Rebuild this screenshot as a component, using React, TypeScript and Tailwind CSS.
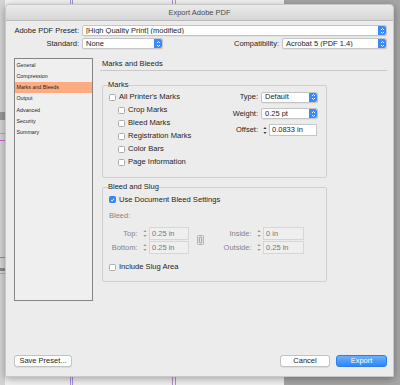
import React from 'react';

const font = "font-['Liberation_Sans',Arial,sans-serif]";

function Backdrop() {
  return (
    <svg className="absolute inset-0" width="400" height="385" viewBox="0 0 400 385">
      <rect x="0" y="0" width="400" height="385" fill="#a7a7a7" />
      <rect x="0" y="0" width="284" height="385" fill="#f3f3f3" />
      <rect x="0" y="0" width="5" height="385" fill="#d6d6d6" />
      <rect x="0" y="112" width="5" height="8" fill="#9a9a9a" />
      <rect x="0" y="268" width="5" height="3" fill="#8c8c8c" />
      <line x1="0" y1="133.5" x2="5" y2="133.5" stroke="#e88fb4" strokeWidth="1" />
      <line x1="0" y1="140.5" x2="5" y2="140.5" stroke="#d35fd8" strokeWidth="1" />
      <line x1="0" y1="257.5" x2="5" y2="257.5" stroke="#d35fd8" strokeWidth="1" />
      <line x1="0" y1="273.5" x2="5" y2="273.5" stroke="#e88fb4" strokeWidth="1" />
      <line x1="70.5" y1="0" x2="70.5" y2="385" stroke="#a98fe0" strokeWidth="1" />
      <line x1="72.5" y1="0" x2="72.5" y2="385" stroke="#a98fe0" strokeWidth="1" />
      <line x1="172.5" y1="0" x2="172.5" y2="385" stroke="#b58bd8" strokeWidth="1" />
      <line x1="175.5" y1="0" x2="175.5" y2="385" stroke="#e08a9a" strokeWidth="1" />
    </svg>
  );
}

function SelectArrows() {
  return (
    <svg width="7" height="10" viewBox="0 0 7 10">
      <path d="M2 4 L3.5 2.5 L5 4" fill="none" stroke="#fff" strokeWidth="0.9" />
      <path d="M2 6 L3.5 7.5 L5 6" fill="none" stroke="#fff" strokeWidth="0.9" />
    </svg>
  );
}

function Select({ value, className }: { value: string; className: string }) {
  return (
    <div
      className={`flex items-center bg-white border border-[#c4c4c4] rounded-[2px] shadow-[0_0.5px_0.5px_rgba(0,0,0,0.08)] ${className}`}
    >
      <span className="flex-1 pl-[3px] text-[7.5px] leading-none text-[#1e1e1e] whitespace-nowrap overflow-hidden">
        {value}
      </span>
      <div className="w-[8px] h-full bg-[#3b8af6] rounded-r-[2px] flex items-center justify-center">
        <SelectArrows />
      </div>
    </div>
  );
}

function Check({ checked = false }: { checked?: boolean }) {
  if (checked) {
    return (
      <div className="w-[7px] h-[7px] rounded-[1.5px] bg-[#3a8bf7] border border-[#2f7de6] flex items-center justify-center">
        <svg width="6" height="6" viewBox="0 0 6 6">
          <path d="M1.2 3.1 L2.5 4.4 L4.9 1.4" fill="none" stroke="#fff" strokeWidth="1" />
        </svg>
      </div>
    );
  }
  return <div className="w-[7px] h-[7px] rounded-[1.5px] bg-white border border-[#ababab]" />;
}

function CheckRow({ label, checked, indent }: { label: string; checked?: boolean; indent?: boolean }) {
  return (
    <div className={`h-[13px] flex items-center gap-[3px] ${indent ? 'pl-[9px]' : ''}`}>
      <Check checked={checked} />
      <span className="text-[7.6px] leading-none text-[#1e1e1e] whitespace-nowrap">{label}</span>
    </div>
  );
}

function Stepper({ disabled }: { disabled?: boolean }) {
  const c = disabled ? '#9a9a9a' : '#444';
  return (
    <div className="w-[8px] h-full flex items-center justify-center">
      <svg width="6" height="11" viewBox="0 0 6 11">
        <polygon points="3,2 1.4,4 4.6,4" fill={c} />
        <polygon points="3,9 1.4,7 4.6,7" fill={c} />
      </svg>
    </div>
  );
}

function NumField({ value, width, disabled }: { value: string; width: string; disabled?: boolean }) {
  return (
    <div className="flex h-[12.5px]">
      <Stepper disabled={disabled} />
      <div
        className={`${width} h-full flex items-center pl-[2px] border ${
          disabled ? 'bg-[#efefef] border-[#d6d6d6] text-[#777]' : 'bg-white border-[#c6c6c6] text-[#1e1e1e]'
        }`}
      >
        <span className="text-[7.5px] leading-none whitespace-nowrap">{value}</span>
      </div>
    </div>
  );
}

function BleedRow({ label, value, labelW, inputW }: { label: string; value: string; labelW: string; inputW: string }) {
  return (
    <div className="flex items-center h-[12.5px]">
      <span className={`${labelW} text-right text-[7.5px] leading-none text-[#858585] pr-[3.5px]`}>{label}</span>
      <NumField value={value} width={inputW} disabled />
    </div>
  );
}

function LinkIcon() {
  return (
    <svg width="7" height="10" viewBox="0 0 7 10">
      <rect x="0.5" y="0.5" width="6" height="9" rx="1" fill="#e4e4e4" stroke="#a6a6a6" strokeWidth="0.8" />
      <rect x="2.4" y="2" width="2.2" height="6" rx="1" fill="none" stroke="#8e8e8e" strokeWidth="0.7" />
    </svg>
  );
}

const navItems = ['General', 'Compression', 'Marks and Bleeds', 'Output', 'Advanced', 'Security', 'Summary'];

function Sidebar() {
  return (
    <div className="w-[79px] h-[243px] bg-[#efefef] border border-[#858585] pt-[0.5px]">
      {navItems.map((item) => (
        <div
          key={item}
          className={`h-[11.3px] flex items-center pl-[1.5px] text-[5.3px] leading-none text-[#262626] ${
            item === 'Marks and Bleeds' ? 'bg-[#fdab80]' : ''
          }`}
        >
          {item}
        </div>
      ))}
    </div>
  );
}

function Button({ label, primary, width }: { label: string; primary?: boolean; width: string }) {
  return (
    <div
      className={`${width} h-[12px] rounded-[3px] flex items-center justify-center text-[7.5px] leading-none ${
        primary
          ? 'bg-gradient-to-b from-[#6ab0fb] to-[#2f86f7] text-white border border-[#2c7fe8]'
          : 'bg-white text-[#1e1e1e] border border-[#c2c2c2] shadow-[0_0.5px_0.5px_rgba(0,0,0,0.12)]'
      }`}
    >
      {label}
    </div>
  );
}

export default function App() {
  return (
    <div className={`relative w-[400px] h-[385px] overflow-hidden ${font}`}>
      <Backdrop />

      <div className="absolute left-[5px] top-[4px] w-[389px] h-[373px] bg-[#ececec] rounded-t-[4px] flex flex-col shadow-[0_2px_8px_rgba(0,0,0,0.35)] border border-[#c8c8c8]">
        <div className="h-[16px] shrink-0 rounded-t-[4px] bg-gradient-to-b from-[#ebebeb] to-[#d5d5d5] border-b border-[#b9b9b9] flex items-center justify-center">
          <span className="text-[7.5px] leading-none text-[#4b4b4b]">Export Adobe PDF</span>
        </div>

        <div className="flex-1 flex flex-col pl-[8px] pr-[6px]">
          <div className="mt-[4px] h-[11px] flex items-center">
            <span className="w-[65px] text-right text-[7.5px] leading-none text-[#1e1e1e]">Adobe PDF Preset:</span>
            <Select value="[High Quality Print] (modified)" className="ml-[3px] flex-1 h-[11px]" />
          </div>

          <div className="mt-[2px] h-[11px] flex items-center">
            <span className="w-[65px] text-right text-[7.5px] leading-none text-[#1e1e1e]">Standard:</span>
            <Select value="None" className="ml-[3px] w-[81px] h-[11px]" />
            <span className="ml-auto text-[7.5px] leading-none text-[#1e1e1e]">Compatibility:</span>
            <Select value="Acrobat 5 (PDF 1.4)" className="ml-[3px] w-[105px] h-[11px]" />
          </div>

          <div className="mt-[9px] flex">
            <Sidebar />

            <div className="ml-[7px] flex-1 flex flex-col">
              <div className="h-[13px] border-b border-[#c9c9c9] flex items-center pl-[2px]">
                <span className="text-[7.6px] leading-none text-[#1e1e1e]">Marks and Bleeds</span>
              </div>

              <fieldset className="mt-[10px] ml-[2px] w-[225px] border border-[#cfcfcf] rounded-[2px]">
                <legend className="ml-[5px] text-[7.5px] leading-[8px] text-[#1e1e1e]">Marks</legend>
                <div className="flex pt-[1.5px] pb-[8.5px] pl-[6px] pr-[8px]">
                  <div className="flex flex-col">
                    <CheckRow label="All Printer's Marks" />
                    <CheckRow label="Crop Marks" indent />
                    <CheckRow label="Bleed Marks" indent />
                    <CheckRow label="Registration Marks" indent />
                    <CheckRow label="Color Bars" indent />
                    <CheckRow label="Page Information" indent />
                  </div>
                  <div className="ml-auto flex flex-col gap-[3.5px]">
                    <div className="h-[13px] flex items-center">
                      <span className="w-[30px] text-right text-[7.5px] leading-none text-[#1e1e1e]">Type:</span>
                      <Select value="Default" className="ml-[3px] w-[57px] h-[11px]" />
                    </div>
                    <div className="h-[13px] flex items-center">
                      <span className="w-[30px] text-right text-[7.5px] leading-none text-[#1e1e1e]">Weight:</span>
                      <Select value="0.25 pt" className="ml-[3px] w-[57px] h-[11px]" />
                    </div>
                    <div className="h-[13px] flex items-center">
                      <span className="w-[30px] text-right text-[7.5px] leading-none text-[#1e1e1e]">Offset:</span>
                      <div className="ml-[3px]">
                        <NumField value="0.0833 in" width="w-[48px]" />
                      </div>
                    </div>
                  </div>
                </div>
              </fieldset>

              <fieldset className="mt-[5px] ml-[2px] w-[225px] border border-[#cfcfcf] rounded-[2px]">
                <legend className="ml-[5px] text-[7.5px] leading-[8px] text-[#1e1e1e]">Bleed and Slug</legend>
                <div className="flex flex-col pt-[2px] pb-[7.5px] pl-[6px]">
                  <CheckRow label="Use Document Bleed Settings" checked />
                  <div className="mt-[5px] h-[10px] flex items-center">
                    <span className="text-[7.5px] leading-none text-[#858585]">Bleed:</span>
                  </div>
                  <div className="mt-[6px] flex items-center">
                    <div className="flex flex-col gap-[1.5px]">
                      <BleedRow label="Top:" value="0.25 in" labelW="w-[32px]" inputW="w-[40px]" />
                      <BleedRow label="Bottom:" value="0.25 in" labelW="w-[32px]" inputW="w-[40px]" />
                    </div>
                    <div className="ml-[8px]">
                      <LinkIcon />
                    </div>
                    <div className="flex flex-col gap-[1.5px]">
                      <BleedRow label="Inside:" value="0 in" labelW="w-[51px]" inputW="w-[41px]" />
                      <BleedRow label="Outside:" value="0.25 in" labelW="w-[51px]" inputW="w-[41px]" />
                    </div>
                  </div>
                  <div className="mt-[7px]">
                    <CheckRow label="Include Slug Area" />
                  </div>
                </div>
              </fieldset>
            </div>
          </div>

          <div className="mt-auto pb-[9px] flex items-center">
            <Button label="Save Preset..." width="w-[58px]" />
            <div className="ml-auto flex gap-[6px]">
              <Button label="Cancel" width="w-[50px]" />
              <Button label="Export" primary width="w-[51px]" />
            </div>
          </div>
        </div>
      </div>
    </div>
  );
}
